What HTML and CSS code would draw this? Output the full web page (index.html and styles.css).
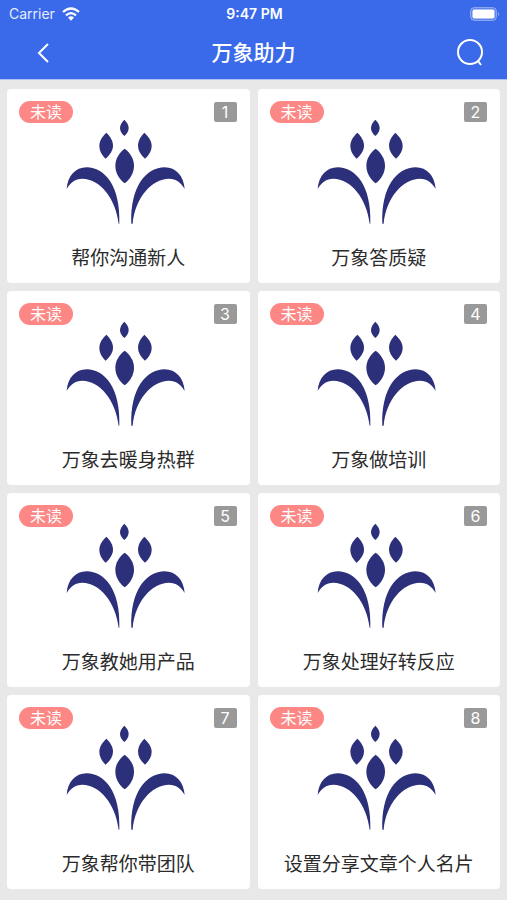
FILE: index.html
```html
<!DOCTYPE html>
<html lang="zh-CN">
<head>
<meta charset="utf-8">
<meta name="viewport" content="width=device-width, initial-scale=1">
<title>万象助力</title>
<link rel="stylesheet" href="styles.css">
</head>
<body>
<svg class="defs" aria-hidden="true">
  <symbol id="plant" viewBox="31 27 378 315">
    <path d="M209 29C217 37 222 45 222 54C222 63 217 71 209 78C201 71 196 63 196 54C196 45 201 37 209 29Z"/>
    <path d="M155 68C166 78 175 92 175 107C175 121 166 134 153 146C142 136 134 122 134 107C134 92 143 79 155 68Z"/>
    <path d="M269 68C281 79 291 92 291 107C291 122 283 135 271 146C258 134 250 121 250 107C250 92 258 79 269 68Z"/>
    <path d="M210 116C226 128 238 146 238 167C238 188 227 207 210 220C193 207 182 188 182 167C182 146 194 128 210 116Z"/>
    <path d="M36 237C39 198 62 172 96 172C150 172 198 228 194 341H192C183 264 135 206 83 206C62 206 47 217 36 237Z"/>
    <path d="M390 237C387 198 364 172 330 172C276 172 226 228 230 341H234C241 264 291 206 343 206C364 206 379 217 390 237Z"/>
  </symbol>
</svg>
<header class="header">
  <div class="status">
    <div class="carrier">
      <span>Carrier</span>
      <svg class="wifi" viewBox="0 0 18 14" aria-hidden="true">
        <path d="M1 5Q9-2 17 5M4 8.300Q9 3.900 14 8.300" fill="none" stroke="currentColor" stroke-width="2.300"/>
        <path d="M6 10.500Q9 8 12 10.500L9 13.700Z" fill="currentColor"/>
      </svg>
    </div>
    <span class="time">9:47 PM</span>
    <svg class="battery" viewBox="0 0 30 14" aria-hidden="true">
      <rect x="0.500" y="0.500" width="26" height="13" rx="4" fill="#fff" fill-opacity=".2" stroke="#fff" stroke-opacity=".35"/>
      <rect x="2.500" y="2.500" width="22" height="9" rx="2" fill="#fff"/>
      <path d="M28 5Q30 7 28 9Z" fill="#fff" fill-opacity=".5"/>
    </svg>
  </div>
  <nav class="nav">
    <button class="icon-button" type="button" aria-label="返回">
      <svg class="icon" viewBox="0 0 28 28" aria-hidden="true"><path d="M26 5L17 14L26 23"/></svg>
    </button>
    <h1 class="title">万象助力</h1>
    <button class="icon-button" type="button" aria-label="搜索">
      <svg class="icon" viewBox="0 0 28 28" aria-hidden="true"><circle cx="13" cy="13" r="12"/><path d="M21 22L24 26"/></svg>
    </button>
  </nav>
</header>
<main class="grid">
  <a class="card" href="#1"><span class="tag">未读</span><span class="number">1</span><svg class="plant"><use href="#plant"/></svg><span class="name">帮你沟通新人</span></a>
  <a class="card" href="#2"><span class="tag">未读</span><span class="number">2</span><svg class="plant"><use href="#plant"/></svg><span class="name">万象答质疑</span></a>
  <a class="card" href="#3"><span class="tag">未读</span><span class="number">3</span><svg class="plant"><use href="#plant"/></svg><span class="name">万象去暖身热群</span></a>
  <a class="card" href="#4"><span class="tag">未读</span><span class="number">4</span><svg class="plant"><use href="#plant"/></svg><span class="name">万象做培训</span></a>
  <a class="card" href="#5"><span class="tag">未读</span><span class="number">5</span><svg class="plant"><use href="#plant"/></svg><span class="name">万象教她用产品</span></a>
  <a class="card" href="#6"><span class="tag">未读</span><span class="number">6</span><svg class="plant"><use href="#plant"/></svg><span class="name">万象处理好转反应</span></a>
  <a class="card" href="#7"><span class="tag">未读</span><span class="number">7</span><svg class="plant"><use href="#plant"/></svg><span class="name">万象帮你带团队</span></a>
  <a class="card" href="#8"><span class="tag">未读</span><span class="number">8</span><svg class="plant"><use href="#plant"/></svg><span class="name">设置分享文章个人名片</span></a>
</main>
</body>
</html>
```
FILE: styles.css
```css
* {
  box-sizing: border-box;
}

body {
  margin: 0;
  background: #e8e8e8;
  color: #2b2b2b;
  font-family: Inter, "Noto Sans CJK SC", sans-serif;
}

.defs {
  display: none;
}

.header {
  background: #3a6aea;
  border-bottom: 1px solid #a9bff5;
  color: #fff;
}

.status {
  display: grid;
  grid-template-columns: 1fr auto 1fr;
  align-items: center;
  height: 27px;
  padding: 0 7px 0 9px;
  font-size: 14px;
  line-height: 20px;
}

.carrier {
  display: flex;
  align-items: center;
  gap: 7px;
  color: #e6edff;
}

.wifi {
  width: 18px;
  height: 14px;
  color: #fff;
}

.time {
  font-weight: 600;
}

.battery {
  justify-self: end;
  width: 30px;
  height: 14px;
}

.nav {
  display: flex;
  align-items: center;
  justify-content: space-between;
  height: 52px;
  padding: 0 22px;
}

.icon-button {
  display: flex;
  padding: 0;
  border: 0;
  background: none;
  color: #fff;
}

.icon {
  width: 28px;
  height: 28px;
  fill: none;
  stroke: currentColor;
  stroke-width: 2;
}

.title {
  margin: 0;
  font-size: 21px;
  font-weight: 500;
  line-height: 30px;
}

.grid {
  display: grid;
  grid-template-columns: 1fr 1fr;
  gap: 8px;
  padding: 9px 7px 11px;
}

.card {
  position: relative;
  display: flex;
  flex-direction: column;
  align-items: center;
  padding: 30px 10px 11px;
  border-radius: 4px;
  background: #fff;
  color: inherit;
  text-decoration: none;
}

.tag,
.number {
  position: absolute;
  top: 12px;
  color: #fff;
  font-size: 16px;
  text-align: center;
}

.tag {
  left: 12px;
  width: 54px;
  border-radius: 11px;
  background: #fc8785;
  line-height: 22px;
}

.number {
  top: 13px;
  right: 13px;
  width: 23px;
  border-radius: 2px;
  background: #999;
  line-height: 20px;
}

.plant {
  width: 126px;
  height: 105px;
  fill: #2c2f79;
}

.name {
  margin-top: 22px;
  font-size: 19px;
  line-height: 26px;
}
```
